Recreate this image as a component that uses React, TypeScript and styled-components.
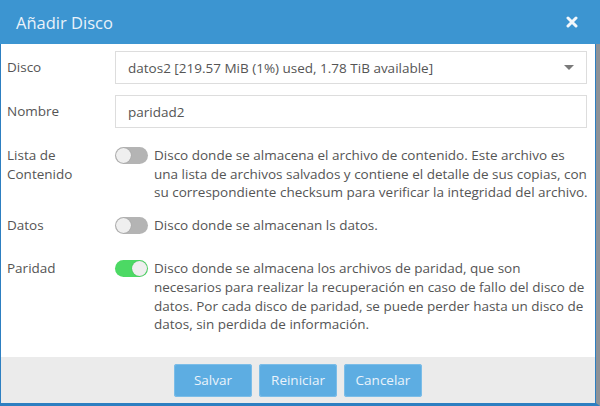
import styled, { createGlobalStyle } from "styled-components";

const Global = createGlobalStyle`
  html, body {
    margin: 0;
    padding: 0;
    background: #8a8f94;
    font-family: "Open Sans", "Liberation Sans", sans-serif;
  }
`;

const Dialog = styled.div`
  width: 600px;
  height: 406px;
  box-sizing: border-box;
  display: flex;
  flex-direction: column;
  background: #fff;
  border-left: 1px solid #2d7fc1;
  border-right: 4px solid #8f9296;
  border-bottom: 3px solid #2d7fc1;
  box-shadow: inset -1px 0 0 #2d7fc1;
`;

const Header = styled.div`
  height: 44px;
  margin-left: -1px;
  margin-right: -4px;
  background: #3c95d1;
  display: flex;
  align-items: center;
  justify-content: space-between;
  padding: 0 22px 0 16px;
`;

const Title = styled.h2`
  margin: 0;
  font-size: 16.5px;
  font-weight: 400;
  color: #e9f2fa;
`;

const Body = styled.div`
  flex: 1;
  padding: 7px 8px 0 6px;
  margin-right: 1px;
`;

const Row = styled.div<{ $mb: number; $center?: boolean }>`
  display: flex;
  align-items: ${(p) => (p.$center ? "center" : "flex-start")};
  margin-bottom: ${(p) => p.$mb}px;
`;

const Label = styled.div`
  width: 108px;
  flex: none;
  font-size: 13.5px;
  line-height: 19px;
  color: #555;
`;

const Field = styled.div`
  flex: 1;
  height: 33px;
  box-sizing: border-box;
  border: 1px solid #ddd;
  display: flex;
  align-items: center;
  justify-content: space-between;
  padding: 0 12px;
  font-size: 13.5px;
  color: #555;
`;

const Caret = styled.span`
  width: 0;
  height: 0;
  border-left: 5px solid transparent;
  border-right: 5px solid transparent;
  border-top: 5px solid #7a7a7a;
`;

const Toggle = styled.span<{ $on?: boolean }>`
  flex: none;
  position: relative;
  width: 33px;
  height: 17px;
  border-radius: 9px;
  margin: 1px 6px 0 0;
  background: ${(p) => (p.$on ? "#4cd964" : "#b4b4b4")};
  &::after {
    content: "";
    position: absolute;
    top: 1px;
    left: ${(p) => (p.$on ? "17px" : "1px")};
    width: 15px;
    height: 15px;
    border-radius: 50%;
    background: #efefef;
    box-shadow: 0 0 1px rgba(0, 0, 0, 0.3);
  }
`;

const Desc = styled.div`
  font-size: 13.5px;
  line-height: 18.7px;
  color: #555;
  white-space: nowrap;
`;

const Footer = styled.div`
  height: 46px;
  background: #ebebeb;
  display: flex;
  justify-content: center;
  align-items: center;
  gap: 7px;
  margin-right: 1px;
`;

const Button = styled.button`
  width: 78px;
  height: 33px;
  border: none;
  border-radius: 3px;
  background: #5dade2;
  color: #eaf3fb;
  font-family: "Open Sans", "Liberation Sans", sans-serif;
  font-size: 13.5px;
  cursor: pointer;
  box-shadow: 0 0 0 1px #7bbde8 inset;
`;

function CloseIcon() {
  return (
    <svg width="12" height="12" viewBox="0 0 12 12">
      <path d="M2 2 L10 10 M10 2 L2 10" stroke="#f3f7fb" strokeWidth="3" strokeLinecap="round" />
    </svg>
  );
}

export default function App() {
  return (
    <>
      <Global />
      <Dialog>
        <Header>
          <Title>Añadir Disco</Title>
          <CloseIcon />
        </Header>
        <Body>
          <Row $mb={11} $center>
            <Label>Disco</Label>
            <Field>
              <span>datos2 [219.57 MiB (1%) used, 1.78 TiB available]</span>
              <Caret />
            </Field>
          </Row>
          <Row $mb={18} $center>
            <Label>Nombre</Label>
            <Field>paridad2</Field>
          </Row>
          <Row $mb={14}>
            <Label>
              Lista de
              <br />
              Contenido
            </Label>
            <Toggle />
            <Desc>
              Disco donde se almacena el archivo de contenido. Este archivo es
              <br />
              una lista de archivos salvados y contiene el detalle de sus copias, con
              <br />
              su correspondiente checksum para verificar la integridad del archivo.
            </Desc>
          </Row>
          <Row $mb={24}>
            <Label>Datos</Label>
            <Toggle />
            <Desc>Disco donde se almacenan ls datos.</Desc>
          </Row>
          <Row $mb={0}>
            <Label>Paridad</Label>
            <Toggle $on />
            <Desc>
              Disco donde se almacena los archivos de paridad, que son
              <br />
              necesarios para realizar la recuperación en caso de fallo del disco de
              <br />
              datos. Por cada disco de paridad, se puede perder hasta un disco de
              <br />
              datos, sin perdida de información.
            </Desc>
          </Row>
        </Body>
        <Footer>
          <Button>Salvar</Button>
          <Button>Reiniciar</Button>
          <Button>Cancelar</Button>
        </Footer>
      </Dialog>
    </>
  );
}
